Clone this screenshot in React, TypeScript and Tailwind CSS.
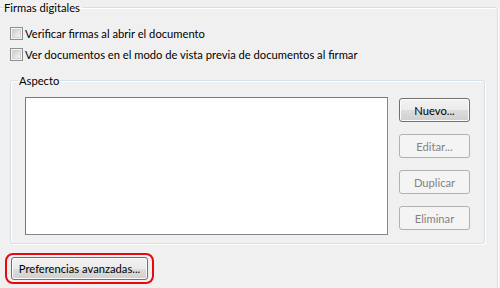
import React from 'react'

const BTN_ON =
  'w-[71px] h-[24px] rounded-[3px] border border-[#707070] bg-[linear-gradient(to_bottom,#f2f2f2_0%,#ebebeb_50%,#dddddd_51%,#cfcfcf_100%)] shadow-[inset_0_0_0_1px_#fcfcfc] text-black flex items-center justify-center'
const BTN_OFF =
  'w-[71px] h-[24px] rounded-[3px] border border-[#adb2b5] bg-[#f4f4f4] text-[#838383] flex items-center justify-center'

function Check({ label }: { label: string }) {
  return (
    <label className="flex items-center h-[21px] gap-[2px]">
      <span className="w-[13px] h-[13px] border border-[#8e8f8f] bg-[#f4f4f4] p-[1px] flex">
        <span className="flex-1 border border-[#d2d2d2] bg-[linear-gradient(135deg,#cbcbcb_0%,#f6f6f6_100%)]" />
      </span>
      <span>{label}</span>
    </label>
  )
}

export default function App() {
  return (
    <div className="w-[500px] h-[288px] bg-[#f0f0f0] overflow-hidden text-[11.2px] leading-[15px] text-black font-['Segoe_UI',Lato,sans-serif]">
      <fieldset className="w-[498px] border-t border-r border-[#d5dfe5] rounded-tr-[3px] shadow-[inset_0_1px_0_#fff,1px_0_0_#fff] pb-[20px]">
        <legend className="ml-[4px] pr-[3px]">Firmas digitales</legend>

        {/* Checkboxes */}
        <div className="ml-[10px] mt-[8px] flex flex-col">
          <Check label="Verificar firmas al abrir el documento" />
          <Check label="Ver documentos en el modo de vista previa de documentos al firmar" />
        </div>

        {/* Aspecto */}
        <fieldset className="ml-[10px] mt-[8px] w-[475px] border border-[#d5dfe5] rounded-[3px] shadow-[inset_1px_1px_0_#fff,1px_1px_0_#fff] pl-[14px] pr-[14px] pb-[8px]">
          <legend className="-ml-[7px] px-[1px]">Aspecto</legend>
          <div className="flex mt-[9px] gap-[11px]">
            <div className="w-[363px] h-[138px] bg-white border border-[#828790] border-t-[#7a7a7a] border-l-[#7a7a7a]" />
            <div className="flex flex-col gap-[12px] pt-[1px]">
              <button className={BTN_ON}>Nuevo...</button>
              <button className={BTN_OFF} disabled>Editar...</button>
              <button className={BTN_OFF} disabled>Duplicar</button>
              <button className={BTN_OFF} disabled>Eliminar</button>
            </div>
          </div>
        </fieldset>

        {/* Highlighted button */}
        <div className="ml-[5px] mt-[9px] inline-flex border-2 border-[#e8080f] rounded-[8px] px-[4px] py-[2px]">
          <button className="w-[137px] h-[23px] whitespace-nowrap rounded-[3px] border border-[#707070] bg-[linear-gradient(to_bottom,#f2f2f2_0%,#ebebeb_50%,#dddddd_51%,#cfcfcf_100%)] shadow-[inset_0_0_0_1px_#fcfcfc] text-black flex items-center justify-center">
            Preferencias avanzadas...
          </button>
        </div>
      </fieldset>
    </div>
  )
}
